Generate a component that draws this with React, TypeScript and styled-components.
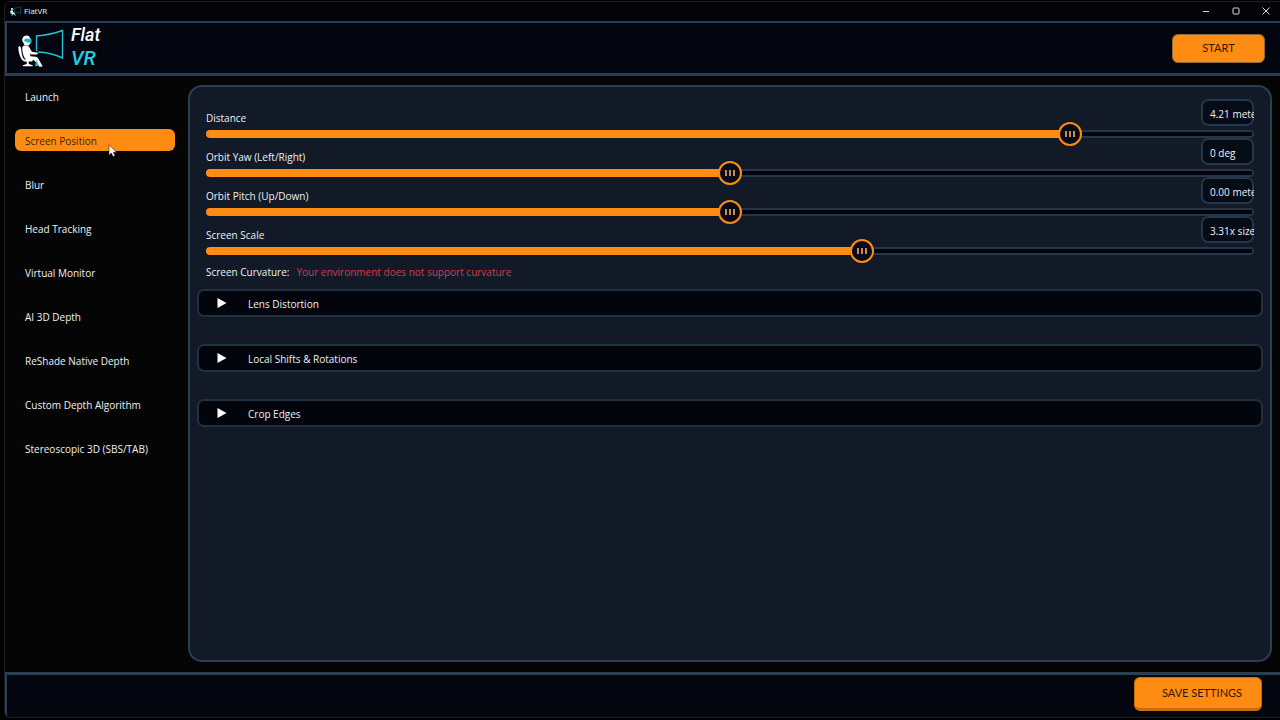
import React, { useState } from "react";
import styled, { createGlobalStyle } from "styled-components";

const line = "#2b3f53";
const orange = "#ff8c12";
const ink = "#03060e";

const GlobalStyle = createGlobalStyle`
  * { box-sizing: border-box; }
  body {
    margin: 0;
    background: #000;
    color: #eef1f4;
    font: 10px/16px "Open Sans", "Noto Sans", sans-serif;
  }
  button, input { font: inherit; color: inherit; }
  button { border: 0; padding: 0; background: none; cursor: default; }
`;

const Window = styled.div`
  display: flex;
  flex-direction: column;
  min-height: calc(100vh - 3px);
  margin: 1px 0 2px 4px;
  border: 1px solid #1c1e20;
  border-right: 0;
  border-radius: 6px 0 0 6px;
  background: #050505;
  overflow: hidden;
`;

const TitleBar = styled.div`
  display: flex;
  align-items: center;
  gap: 3px;
  height: 19px;
  padding: 0 8px 1px 5px;
  background: #02040a;
  font-size: 8px;
`;

const WindowControls = styled.div`
  display: flex;
  gap: 18px;
  margin-left: auto;
`;

const ControlButton = styled.button`
  display: flex;
  align-items: center;
  justify-content: center;
  width: 12px;
  height: 16px;
`;

const Header = styled.header`
  display: flex;
  align-items: center;
  justify-content: space-between;
  height: 55px;
  padding: 0 15px 0 11px;
  border: 2px solid ${line};
  border-width: 2px 0 3px 2px;
  background: ${ink};
`;

const Brand = styled.div`
  display: flex;
  align-items: center;
  gap: 7px;
`;

const BrandName = styled.div`
  display: flex;
  flex-direction: column;
  padding-bottom: 2px;
  font-family: Roboto, sans-serif;
  font-style: italic;
  font-weight: 500;
`;

const BrandFirst = styled.span`
  font-size: 18px;
  line-height: 22px;
  color: #fff;
`;

const BrandAccent = styled.span`
  font-size: 20px;
  line-height: 24px;
  color: #1fd0e0;
`;

const ActionButton = styled.button<{ $raised?: boolean }>`
  width: ${(p) => (p.$raised ? 128 : 93)}px;
  height: ${(p) => (p.$raised ? 34 : 29)}px;
  padding-left: ${(p) => (p.$raised ? 8 : 0)}px;
  border: 1px solid ${(p) => (p.$raised ? "#c96c10" : "#8f6a3c")};
  border-bottom-width: ${(p) => (p.$raised ? 3 : 1)}px;
  border-radius: 6px;
  background: ${orange};
  color: #2b1704;
  font-family: Lato, sans-serif;
  font-size: 11px;
`;

const Body = styled.div`
  display: flex;
  flex: 1;
  padding: 9px 8px 10px 10px;
`;

const Sidebar = styled.nav`
  display: flex;
  flex-direction: column;
  gap: 22px;
  width: 160px;
  margin-right: 13px;
`;

const NavItem = styled.button<{ $active: boolean }>`
  position: relative;
  height: 22px;
  padding: 2px 10px 0;
  border-radius: 6px;
  text-align: left;
  background: ${(p) => (p.$active ? orange : "transparent")};
  color: ${(p) => (p.$active ? "#3a2005" : "inherit")};
`;

const Pointer = styled.svg`
  position: absolute;
  left: 93px;
  top: 15px;
  z-index: 1;
`;

const Panel = styled.main`
  flex: 1;
  min-width: 0;
  padding: 12px 7px;
  border: 2px solid ${line};
  border-radius: 14px;
  background: #121a28;
`;

const Settings = styled.div`
  padding: 0 9px;
`;

const SliderRow = styled.div`
  height: 39px;
`;

const SliderHead = styled.div`
  display: flex;
  align-items: flex-end;
  justify-content: space-between;
  height: 27px;
  margin-bottom: 4px;
`;

const ValueBox = styled.input`
  width: 53px;
  height: 27px;
  padding: 3px 0 0 9px;
  border: 0;
  border-radius: 7px;
  outline: 0;
  background: #060c16;
  box-shadow: inset 0 0 0 2px #25354a;
`;

const Slider = styled.input`
  appearance: none;
  display: block;
  width: 100%;
  height: 8px;
  margin: 0;
  border-radius: 4px;
  outline: 0;
  background:
    linear-gradient(${orange}, ${orange}) left / var(--fill) 100% no-repeat,
    linear-gradient(#25354a, #25354a) right / 2px 100% no-repeat,
    linear-gradient(#25354a 2px, #01040b 2px 6px, #25354a 6px);

  &::-webkit-slider-thumb {
    appearance: none;
    width: 24px;
    height: 24px;
    border: 2px solid ${orange};
    border-radius: 50%;
    background:
      linear-gradient(90deg, #c98a55 2px, transparent 2px 4px, #c98a55 4px 6px, transparent 6px 8px, #c98a55 8px)
        center / 10px 6px no-repeat,
      #050a18;
  }
`;

const CurvatureRow = styled.div`
  display: flex;
  gap: 7px;
  padding: 9px 0;
`;

const Warning = styled.span`
  color: #d83a48;
`;

const Sections = styled.div`
  display: flex;
  flex-direction: column;
  gap: 27px;
`;

const SectionButton = styled.button`
  display: flex;
  align-items: center;
  gap: 21px;
  height: 28px;
  padding: 0 18px;
  border: 2px solid #20303f;
  border-radius: 7px;
  background: #02050c;
`;

const SectionTitle = styled.span`
  padding-top: 2px;
`;

const Footer = styled.footer`
  display: flex;
  justify-content: flex-end;
  height: 45px;
  padding: 2px 18px 0;
  border: 2px solid ${line};
  border-width: 3px 0 0 2px;
  border-radius: 0 0 0 4px;
  background: ${ink};
`;

const Logo = ({ width, height }: { width: number; height: number }) => (
  <svg width={width} height={height} viewBox="0 0 46 40" fill="none" aria-hidden="true">
    <path d="M18.500 23V8Q32 7 44.500 2.500V30Q33 24.500 19.500 24" stroke="#1fc3d3" strokeWidth="1.400" />
    <path d="M5.300 14.500a4.200 4.200 0 1 1 7.200-3.700l.2 4.200-2 2.500-4.400-.5Z" fill="#fff" />
    <path d="M7 10.600l6.600.3v3.900l-4-.3-3.600-1.600Z" fill="#19b5c8" />
    <path d="M.3 20c0-2.200 2.200-2.200 2.700 0 .6 5 1.200 9.500 3.400 11.500h8v2H6.500C2.500 32 .6 25 .3 20Z" fill="#fff" />
    <path d="M4.200 19.500c1-2.800 5.600-3 7.200 0l2.500 4.300 5 .6c1.200.2 1.200 1.900 0 2l-6 .1-1.200-1.400.8 3.200 5.200.5c1.400.2 2.200 1 2.800 2.300l4.200 7.300-3.200.3-5.400-6.400-7-.1C6 31 4.200 25 4.200 19.500Z" fill="#fff" />
    <path d="M18.300 32l2.700 6h-4Z" fill="#19b5c8" />
    <path d="M8.700 33h2v3l4 1.200v1H4.900v-1l3.800-1.200Z" fill="#fff" />
  </svg>
);

const navItems = [
  "Launch",
  "Screen Position",
  "Blur",
  "Head Tracking",
  "Virtual Monitor",
  "AI 3D Depth",
  "ReShade Native Depth",
  "Custom Depth Algorithm",
  "Stereoscopic 3D (SBS/TAB)",
];

const sliders = [
  { id: "distance", label: "Distance", value: 832, text: "4.21 meters" },
  { id: "yaw", label: "Orbit Yaw (Left/Right)", value: 500, text: "0 deg" },
  { id: "pitch", label: "Orbit Pitch (Up/Down)", value: 500, text: "0.00 meters" },
  { id: "scale", label: "Screen Scale", value: 629, text: "3.31x size" },
];

const sections = ["Lens Distortion", "Local Shifts & Rotations", "Crop Edges"];

function SliderSetting({ id, label, value, text }: (typeof sliders)[number]) {
  const [current, setCurrent] = useState(value);
  return (
    <SliderRow>
      <SliderHead>
        <label htmlFor={id}>{label}</label>
        <ValueBox aria-label={`${label} value`} defaultValue={text} />
      </SliderHead>
      <Slider
        id={id}
        type="range"
        min={0}
        max={1000}
        value={current}
        onChange={(e) => setCurrent(Number(e.target.value))}
        style={{ "--fill": `${current / 10}%` } as React.CSSProperties}
      />
    </SliderRow>
  );
}

export default function App() {
  const [active, setActive] = useState("Screen Position");
  return (
    <>
      <GlobalStyle />
      <Window>
        <TitleBar>
          <Logo width={11} height={10} />
          <span>FlatVR</span>
          <WindowControls>
            <ControlButton aria-label="Minimize">
              <svg width="8" height="8" stroke="#d8d8d8">
                <path d="M1 4.500h6" />
              </svg>
            </ControlButton>
            <ControlButton aria-label="Maximize">
              <svg width="8" height="8" stroke="#d8d8d8" fill="none">
                <rect x="1" y="1" width="6" height="6" rx="1" />
              </svg>
            </ControlButton>
            <ControlButton aria-label="Close">
              <svg width="8" height="8" stroke="#d8d8d8">
                <path d="M.5.5l7 7M7.500.5l-7 7" />
              </svg>
            </ControlButton>
          </WindowControls>
        </TitleBar>
        <Header>
          <Brand>
            <Logo width={46} height={40} />
            <BrandName>
              <BrandFirst>Flat</BrandFirst>
              <BrandAccent>VR</BrandAccent>
            </BrandName>
          </Brand>
          <ActionButton>START</ActionButton>
        </Header>
        <Body>
          <Sidebar>
            {navItems.map((name) => (
              <NavItem key={name} $active={name === active} onClick={() => setActive(name)}>
                {name}
                {name === "Screen Position" && (
                  <Pointer width="10" height="14" viewBox="0 0 10 14" aria-hidden="true">
                    <path d="M1 .8v10.400l2.400-2.200 1.600 3.600 2-.9-1.600-3.500h3.200Z" fill="#fff" stroke="#222" strokeWidth=".6" />
                  </Pointer>
                )}
              </NavItem>
            ))}
          </Sidebar>
          <Panel>
            <Settings>
              {sliders.map((s) => (
                <SliderSetting key={s.id} {...s} />
              ))}
              <CurvatureRow>
                <span>Screen Curvature:</span>
                <Warning>Your environment does not support curvature</Warning>
              </CurvatureRow>
            </Settings>
            <Sections>
              {sections.map((title) => (
                <SectionButton key={title} aria-expanded={false}>
                  <svg width="10" height="10" fill="#fff" aria-hidden="true">
                    <path d="M.5 0L9.500 5L.5 10Z" />
                  </svg>
                  <SectionTitle>{title}</SectionTitle>
                </SectionButton>
              ))}
            </Sections>
          </Panel>
        </Body>
        <Footer>
          <ActionButton $raised>SAVE SETTINGS</ActionButton>
        </Footer>
      </Window>
    </>
  );
}
